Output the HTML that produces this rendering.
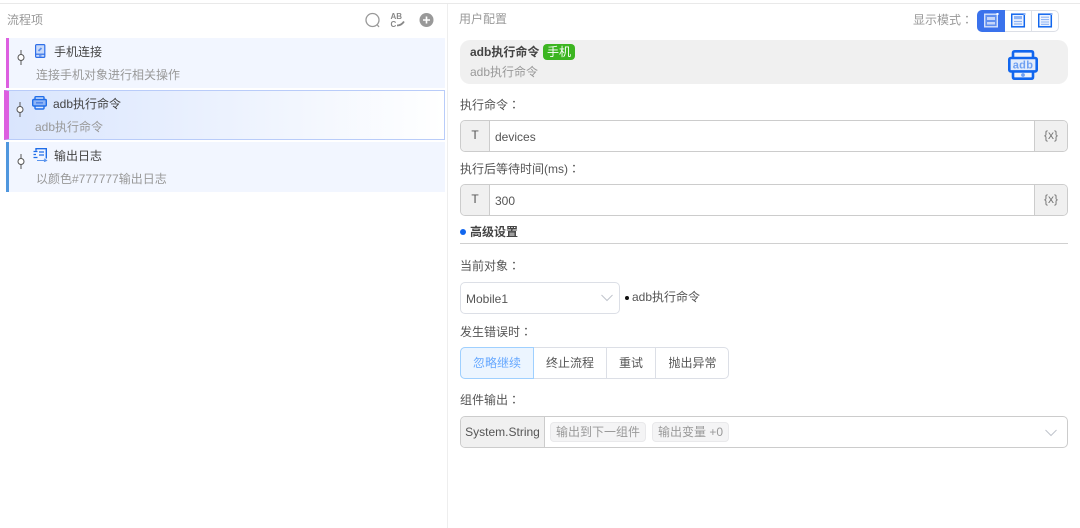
<!DOCTYPE html>
<html lang="zh">
<head>
<meta charset="utf-8">
<style>
html,body{margin:0;padding:0;width:1080px;height:528px;overflow:hidden;background:#fff}
body{position:relative;font-family:"Liberation Sans","Noto Sans CJK SC",sans-serif;font-size:12px;color:#555}
.a{position:absolute;white-space:nowrap;line-height:16px}
.b{position:absolute;box-sizing:border-box}
.g{color:#999}
.d{color:#444}
.c{font-family:"Noto Sans CJK TC",sans-serif}
.x{color:#777;text-align:center;line-height:28px}
svg{position:absolute;display:block}
</style>
</head>
<body>
<div class="b" style="left:0;top:3px;width:1080px;height:1px;background:#e9e9e9"></div>
<div class="b" style="left:447px;top:4px;width:1px;height:524px;background:#eee"></div>

<div class="a g" style="left:7px;top:12px">流程项</div>
<svg style="left:364px;top:12px" width="18" height="18" viewBox="0 0 18 18" fill="none"><circle cx="8.5" cy="8" r="6.5" stroke="#999" stroke-width="1.3"/><path d="M13 12.5l2 2.5" stroke="#999" stroke-width="1.3"/></svg>
<svg style="left:390px;top:12px" width="16" height="16" viewBox="0 0 16 16" fill="none"><text x="0.5" y="7" font-family="Liberation Sans" font-size="8" font-weight="700" fill="#888">AB</text><text x="0.5" y="15" font-family="Liberation Sans" font-size="8" font-weight="700" fill="#888">C</text><path d="M7 13.5c3 0 5-1 7-4" stroke="#888" stroke-width="1.8"/></svg>
<svg style="left:419px;top:13px" width="15" height="15" viewBox="0 0 15 15"><circle cx="7.5" cy="7" r="7" fill="#999"/><path d="M4 7h7M7.5 3.5v7" stroke="#fff" stroke-width="1.6"/></svg>

<!-- item 1 -->
<div class="b" style="left:6px;top:38px;width:439px;height:50px;background:#f2f6ff;border-left:3px solid #dd5fe0"></div>
<svg style="left:16px;top:50px" width="10" height="15" viewBox="0 0 10 15" fill="none"><path d="M5 0v15" stroke="#555"/><circle cx="5" cy="7.5" r="3" fill="#fff" stroke="#555"/></svg>
<svg style="left:35px;top:44px" width="11" height="15" viewBox="0 0 11 15" fill="none"><rect x=".6" y=".6" width="9.2" height="12.8" rx="1" fill="#c9daf9" stroke="#2f6fe8" stroke-width="1.2"/><path d="M.6 10.2h9.2" stroke="#2f6fe8" stroke-width="1.2"/><path d="M3.5 7l3-3" stroke="#5a8fee" stroke-width="1.8"/><path d="M4 11.9h2.5" stroke="#2f6fe8"/></svg>
<div class="a d" style="left:54px;top:44px">手机连接</div>
<div class="a g" style="left:36px;top:67px">连接手机对象进行相关操作</div>

<!-- item 2 -->
<div class="b" style="left:4px;top:90px;width:441px;height:50px;background:linear-gradient(90deg,#d9e5fd,#fff);border:1px solid #b9ccf9;border-left:5px solid #dd5fe0"></div>
<svg style="left:15px;top:102px" width="10" height="15" viewBox="0 0 10 15" fill="none"><path d="M5 0v15" stroke="#555"/><circle cx="5" cy="7.5" r="3" fill="#fff" stroke="#555"/></svg>
<svg style="left:32px;top:96px" width="15" height="14" viewBox="0 0 15 14" fill="none"><path d="M3 4V1.5Q3 .7 4 .7h7q1 0 1 .8V4M3 10v2q0 1 1 1h7q1 0 1-1v-2" stroke="#1f6de8" stroke-width="1.4"/><rect x=".7" y="3.5" width="13.6" height="6.5" rx="1" fill="#8fb4f5" stroke="#1f6de8" stroke-width="1.4"/><path d="M4 6.8h7" stroke="#4f86ea" stroke-width="1.6"/></svg>
<div class="a d" style="left:53px;top:96px">adb执行命令</div>
<div class="a g" style="left:35px;top:119px">adb执行命令</div>

<!-- item 3 -->
<div class="b" style="left:6px;top:142px;width:439px;height:50px;background:#f2f6ff;border-left:3px solid #4f97de"></div>
<svg style="left:16px;top:154px" width="10" height="15" viewBox="0 0 10 15" fill="none"><path d="M5 0v15" stroke="#555"/><circle cx="5" cy="7.5" r="3" fill="#fff" stroke="#555"/></svg>
<svg style="left:33px;top:148px" width="15" height="14" viewBox="0 0 15 14" fill="none"><path d="M3 2.8V.7h10.3v9.8" stroke="#1f6de8" stroke-width="1.4"/><path d="M.5 3.5h4M.5 6.5h2.5M.5 9.5h4M6 4h5M6 7h5" stroke="#1f6de8" stroke-width="1.3"/><path d="M4 12.5h9M11 10.8l2.5 1.7-2.5 1.2" stroke="#5a94ee" stroke-width="1.1"/></svg>
<div class="a d" style="left:54px;top:148px">输出日志</div>
<div class="a g" style="left:36px;top:171px">以颜色#777777输出日志</div>

<!-- right -->
<div class="a g" style="left:459px;top:11px">用户配置</div>
<div class="a g" style="left:913px;top:12px">显示模式<span class="c" lang="zh-TW">：</span></div>
<div class="b" style="left:977px;top:10px;width:82px;height:22px;border:1px solid #dcdfe6;border-radius:5px"></div>
<div class="b" style="left:977px;top:10px;width:28px;height:22px;background:#3a72ec;border-radius:5px 0 0 5px"></div>
<div class="b" style="left:1031px;top:10px;width:1px;height:22px;background:#dcdfe6"></div>
<svg style="left:984px;top:13px" width="15" height="15" viewBox="0 0 15 15" fill="none"><rect x=".7" y="1.2" width="12.6" height="12.6" fill="#5f8ff0" stroke="#d5e2fb" stroke-width="1.4"/><rect x="3" y="4" width="8" height="3" fill="#c5d6f9"/><rect x="3" y="9" width="8" height="2.5" fill="#c5d6f9"/><rect x="12.5" y="0" width="2" height="2" fill="#fff"/></svg>
<svg style="left:1011px;top:13px" width="15" height="15" viewBox="0 0 15 15" fill="none"><rect x=".7" y="1.2" width="12.6" height="12.6" fill="#eef3fe" stroke="#1166ee" stroke-width="1.5"/><rect x="3" y="3" width="8" height="3.2" fill="#8fb4f5"/><path d="M3 8.5h8M3 11h8" stroke="#8fb4f5" stroke-width="1.2"/><rect x="12.5" y="0" width="2" height="2" fill="#8fb4f5"/></svg>
<svg style="left:1038px;top:13px" width="15" height="15" viewBox="0 0 15 15" fill="none"><rect x=".7" y="1.2" width="12.6" height="12.6" fill="#eef3fe" stroke="#1166ee" stroke-width="1.5"/><path d="M3 4.2h8M3 6.6h8M3 9h8M3 11.3h8" stroke="#8fb4f5" stroke-width="1.1"/><rect x="12.5" y="0" width="2" height="2" fill="#8fb4f5"/></svg>

<div class="b" style="left:460px;top:40px;width:608px;height:44px;background:#f0f0f0;border-radius:10px"></div>
<div class="a" style="left:470px;top:44px;font-weight:700;color:#444">adb执行命令</div>
<div class="a" style="left:543px;top:44px;width:32px;height:16px;background:#3cb521;color:#fff;border-radius:4px;text-align:center">手机</div>
<div class="a g" style="left:470px;top:64px">adb执行命令</div>
<svg style="left:1008px;top:50px" width="30" height="30" viewBox="0 0 30 30" fill="none"><path d="M5 8V3q0-1.7 1.7-1.7h16.6q1.7 0 1.7 1.7v5M5 21v6q0 1.7 1.7 1.7h16.6q1.7 0 1.7-1.7v-6" fill="#eef3fb" stroke="#1166ee" stroke-width="2.6"/><rect x="1.3" y="8" width="27.4" height="13.4" rx="1.5" fill="#e3ecfb" stroke="#1166ee" stroke-width="2.6"/><text x="15" y="18.5" text-anchor="middle" font-family="Liberation Sans" font-size="11" font-weight="700" letter-spacing=".3" fill="#6fa0f2">adb</text><circle cx="15" cy="25" r="1.9" fill="#6fa0f2"/></svg>

<!-- field 1 -->
<div class="a" style="left:460px;top:97px">执行命令<span class="c" lang="zh-TW">：</span></div>
<div class="b" style="left:460px;top:120px;width:608px;height:32px;border:1px solid #ccc;border-radius:5px;overflow:hidden">
  <div class="b" style="left:0;top:0;width:29px;height:30px;background:#f0f0f0;border-right:1px solid #ccc;text-align:center;line-height:28px">T</div>
  <div class="a" style="left:34px;top:8px">devices</div>
  <div class="b x" style="left:573px;top:0;width:33px;height:30px;background:#f0f0f0;border-left:1px solid #ccc">{x}</div>
</div>

<!-- field 2 -->
<div class="a" style="left:460px;top:161px">执行后等待时间(ms)<span class="c" lang="zh-TW">：</span></div>
<div class="b" style="left:460px;top:184px;width:608px;height:32px;border:1px solid #ccc;border-radius:5px;overflow:hidden">
  <div class="b" style="left:0;top:0;width:29px;height:30px;background:#f0f0f0;border-right:1px solid #ccc;text-align:center;line-height:28px">T</div>
  <div class="a" style="left:34px;top:8px">300</div>
  <div class="b x" style="left:573px;top:0;width:33px;height:30px;background:#f0f0f0;border-left:1px solid #ccc">{x}</div>
</div>

<!-- advanced -->
<div class="b" style="left:460px;top:229px;width:6px;height:6px;border-radius:50%;background:#1166ee"></div>
<div class="a" style="left:470px;top:224px;font-weight:700;color:#444">高级设置</div>
<div class="b" style="left:460px;top:243px;width:608px;height:1px;background:#d0d0d0"></div>

<div class="a" style="left:460px;top:258px">当前对象<span class="c" lang="zh-TW">：</span></div>
<div class="b" style="left:460px;top:282px;width:160px;height:32px;border:1px solid #dcdfe6;border-radius:5px"></div>
<div class="a" style="left:466px;top:291px">Mobile1</div>
<svg style="left:600px;top:294px" width="14" height="8" viewBox="0 0 14 8" fill="none"><path d="M1.5 1l5.5 5.5L12.5 1" stroke="#c0c4cc"/></svg>
<div class="b" style="left:625px;top:296px;width:4px;height:4px;border-radius:50%;background:#111"></div>
<div class="a" style="left:632px;top:289px">adb执行命令</div>

<div class="a" style="left:460px;top:324px">发生错误时<span class="c" lang="zh-TW">：</span></div>
<div class="b" style="left:460px;top:347px;width:269px;height:32px;border:1px solid #dcdfe6;border-radius:5px"></div>
<div class="b" style="left:460px;top:347px;width:74px;height:32px;border:1px solid #9fd0ff;background:#ecf5ff;border-radius:5px 0 0 5px;color:#66a8ff;text-align:center;line-height:30px">忽略继续</div>
<div class="b" style="left:534px;top:347px;width:73px;height:32px;border-right:1px solid #dcdfe6;text-align:center;line-height:32px">终止流程</div>
<div class="b" style="left:607px;top:347px;width:49px;height:32px;border-right:1px solid #dcdfe6;text-align:center;line-height:32px">重试</div>
<div class="b" style="left:656px;top:347px;width:73px;height:32px;text-align:center;line-height:32px">抛出异常</div>

<div class="a" style="left:460px;top:392px">组件输出<span class="c" lang="zh-TW">：</span></div>
<div class="b" style="left:460px;top:416px;width:608px;height:32px;border:1px solid #ccc;border-radius:5px;overflow:hidden">
  <div class="b" style="left:0;top:0;width:84px;height:30px;background:#f0f0f0;border-right:1px solid #ccc;text-align:center;line-height:30px">System.String</div>
</div>
<div class="b g" style="left:550px;top:422px;width:96px;height:20px;background:#f4f4f5;border:1px solid #e9e9eb;border-radius:4px;text-align:center;line-height:18px">输出到下一组件</div>
<div class="b g" style="left:652px;top:422px;width:77px;height:20px;background:#f4f4f5;border:1px solid #e9e9eb;border-radius:4px;text-align:center;line-height:18px">输出变量 +0</div>
<svg style="left:1044px;top:429px" width="14" height="8" viewBox="0 0 14 8" fill="none"><path d="M1.5 1l5.5 5.5L12.5 1" stroke="#c0c4cc"/></svg>
</body>
</html>
